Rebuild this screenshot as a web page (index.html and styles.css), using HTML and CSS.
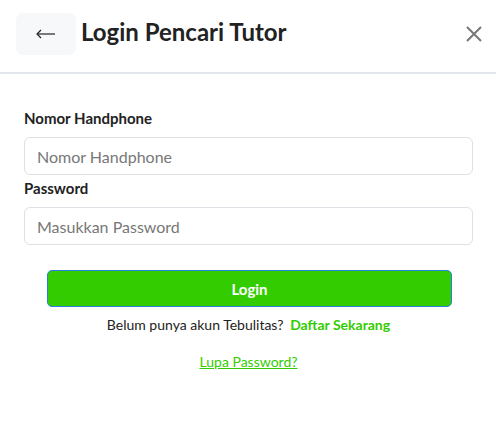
FILE: index.html
```html
<!DOCTYPE html>
<html lang="id">
<head>
<meta charset="utf-8">
<title>Login Pencari Tutor</title>
<link rel="stylesheet" href="styles.css">
</head>
<body>
<div class="modal">
  <header class="modal-header">
    <button class="back-btn" type="button" aria-label="Kembali">
      <svg width="20" height="10" viewBox="0 0 20 10" fill="none" stroke="#222" stroke-width="1.2">
        <path d="M1 5 H19"/>
        <path d="M5 1 L1 5 L5 9"/>
      </svg>
    </button>
    <h1 class="title">Login Pencari Tutor</h1>
    <button class="close-btn" type="button" aria-label="Tutup">
      <svg width="16" height="16" viewBox="0 0 16 16" fill="none" stroke="#777" stroke-width="2">
        <path d="M1 1 L15 15 M15 1 L1 15"/>
      </svg>
    </button>
  </header>
  <form class="form">
    <label class="label" for="hp">Nomor Handphone</label>
    <input class="input" id="hp" type="text" placeholder="Nomor Handphone">
    <label class="label label-pw" for="pw">Password</label>
    <input class="input" id="pw" type="password" placeholder="Masukkan Password">
    <button class="login-btn" type="button">Login</button>
    <p class="register">Belum punya akun Tebulitas? <a class="register-link" href="#">Daftar Sekarang</a></p>
    <p class="forgot"><a class="forgot-link" href="#">Lupa Password?</a></p>
  </form>
</div>
</body>
</html>
```
FILE: styles.css
```css
* { box-sizing: border-box; }
html, body { margin: 0; padding: 0; background: #fff; }
body { font-family: Lato, "Noto Sans", sans-serif; color: #222; }

.modal { width: 496px; }

.modal-header {
  display: flex;
  align-items: center;
  height: 74px;
  padding: 14px 14px 18px 16px;
  border-bottom: 2px solid #e2e5e9;
}
.back-btn {
  width: 60px;
  height: 42px;
  border: none;
  border-radius: 7px;
  background: #f7f8fa;
  display: flex;
  align-items: center;
  justify-content: center;
  padding: 0;
  margin-right: 5px;
}
.title {
  margin: 0;
  font-size: 24px;
  font-weight: 700;
  color: #222;
  flex: 1;
  line-height: 1;
  position: relative;
  top: -2px;
}
.close-btn {
  border: none;
  background: none;
  padding: 0;
  width: 16px;
  height: 16px;
  display: flex;
}

.form {
  display: flex;
  flex-direction: column;
  padding: 35px 23px 0 24px;
}
.label {
  font-size: 15px;
  font-weight: 700;
  color: #222;
  line-height: 18px;
  margin-bottom: 10px;
}
.label-pw { margin-top: 4px; }
.input {
  height: 38px;
  width: 100%;
  border: 1px solid #dfe0e5;
  border-radius: 6px;
  padding: 0 12px;
  font-family: Lato, "Noto Sans", sans-serif;
  font-size: 16px;
  color: #222;
  outline: none;
}
.input::placeholder { color: #777; }

.login-btn {
  margin: 25px 21px 0 23px;
  height: 37px;
  border: 1px solid #2a7de1;
  border-radius: 5px;
  background: #33cc00;
  color: #fff;
  font-family: Lato, "Noto Sans", sans-serif;
  font-size: 15px;
  font-weight: 700;
}
.register {
  margin: 9px 0 0;
  text-align: center;
  font-size: 14px;
  line-height: 18px;
  color: #222;
}
.register-link {
  color: #33cc00;
  font-weight: 700;
  text-decoration: none;
  margin-left: 3px;
}
.forgot {
  margin: 19px 0 0;
  text-align: center;
  font-size: 14px;
  line-height: 18px;
}
.forgot-link { color: #33cc00; text-decoration: underline; }
```
